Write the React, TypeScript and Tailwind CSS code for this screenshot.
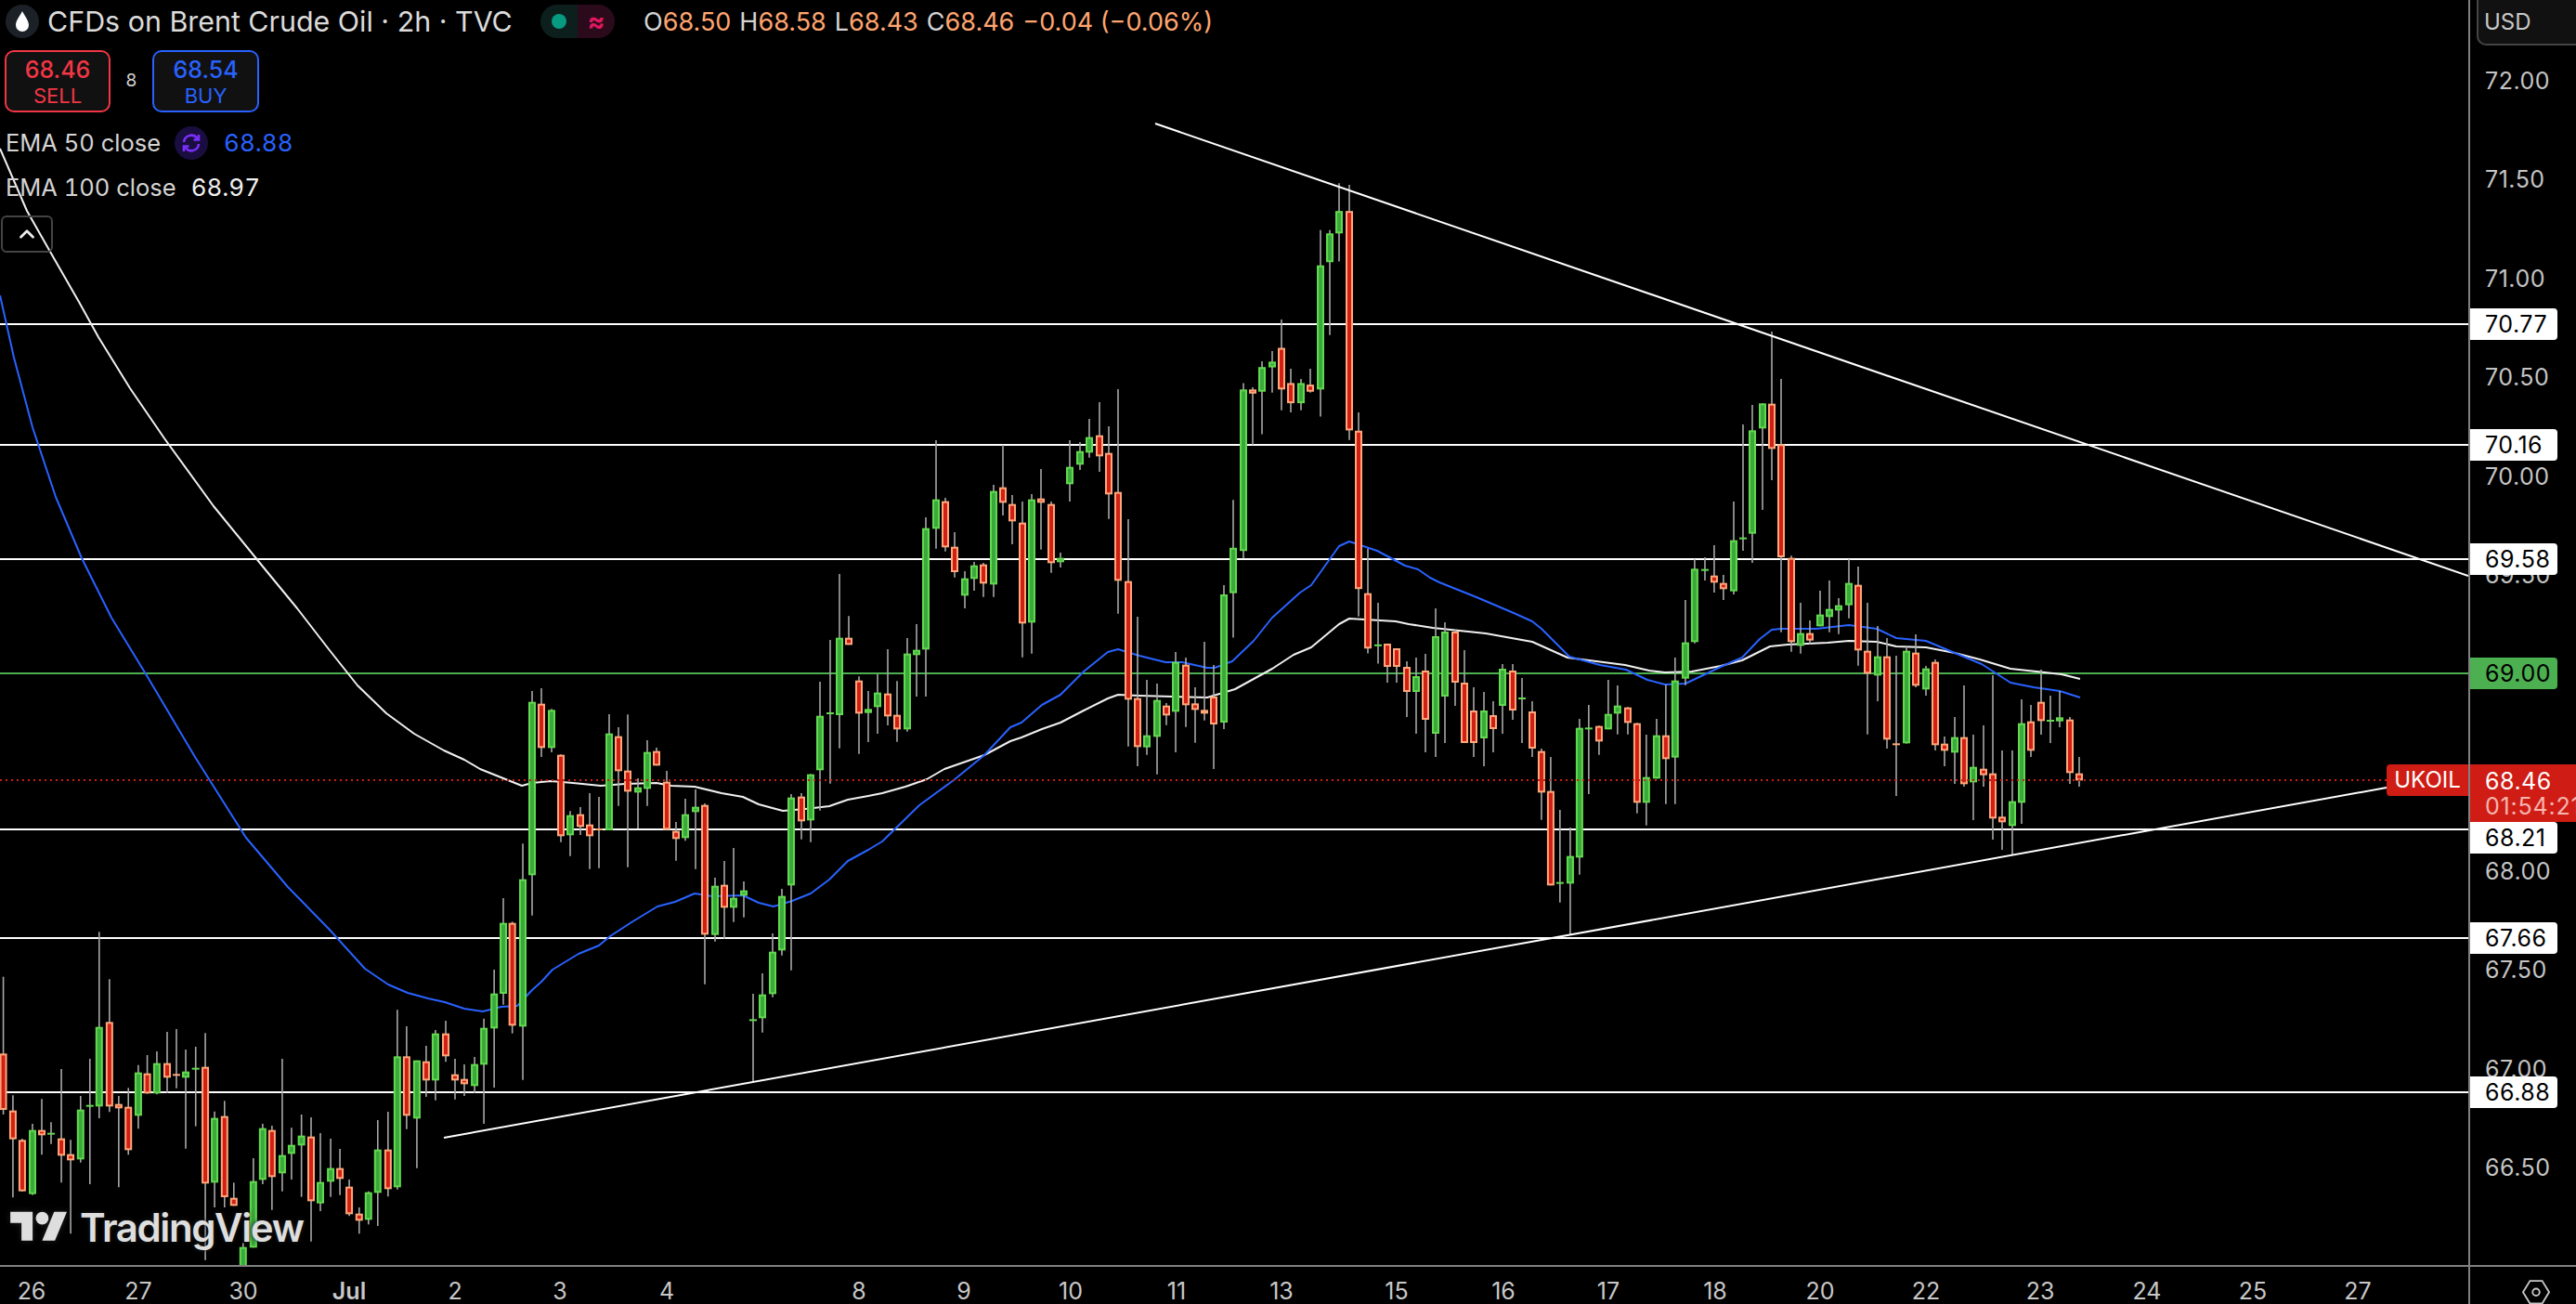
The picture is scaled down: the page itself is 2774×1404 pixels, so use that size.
import { ChevronUp } from "lucide-react";

type Row = [number, number, number, number, number, "g" | "r"];

// rows are read off zoomed crops, so each block carries its own origin and scale
const crop = (ox: number, oy: number, sx: number, sy: number, rows: Row[]) =>
  rows.map(([x, wt, wb, bt, bb, c]) => ({
    x: ox + x / sx,
    wt: oy + wt / sy,
    wb: oy + wb / sy,
    bt: oy + bt / sy,
    bb: oy + bb / sy,
    c,
  }));

const candles = [
  ...crop(0, 1000, 2.8, 3, [
    [10, 155, 600, 403, 585, "r"], [39, 538, 868, 587, 680, "r"], [67, 678, 848, 682, 848, "r"], [98, 630, 860, 650, 857, "g"],
    [126, 550, 730, 650, 667, "r"], [154, 625, 695, 662, 662, "g"], [185, 453, 820, 677, 733, "r"], [213, 682, 985, 728, 748, "r"],
    [243, 540, 755, 584, 745, "g"], [271, 420, 825, 572, 572, "g"], [299, 10, 612, 317, 574, "g"], [330, 163, 592, 301, 574, "r"],
    [358, 540, 835, 566, 580, "r"], [387, 514, 730, 575, 715, "r"], [417, 440, 646, 464, 604, "g"], [444, 408, 533, 467, 532, "r"],
    [473, 396, 535, 434, 532, "g"], [504, 333, 530, 434, 481, "r"], [532, 324, 515, 472, 482, "r"], [560, 390, 710, 461, 481, "g"],
    [590, 381, 638, 452, 452, "g"], [619, 337, 1070, 446, 823, "r"], [647, 590, 900, 611, 820, "g"], [677, 556, 900, 605, 867, "r"],
    [705, 820, 895, 869, 895, "r"], [733, 1015, 1100, 1028, 1100, "g"], [764, 741, 1030, 815, 1030, "g"], [792, 630, 825, 644, 811, "g"],
    [820, 636, 908, 650, 802, "r"], [851, 420, 848, 731, 790, "g"], [879, 643, 810, 698, 727, "g"], [909, 600, 866, 668, 700, "g"],
    [938, 609, 1010, 671, 880, "r"], [966, 660, 912, 818, 887, "g"], [997, 678, 866, 773, 817, "g"], [1025, 711, 860, 773, 808, "r"],
    [1053, 810, 928, 833, 922, "r"], [1083, 900, 985, 920, 943, "r"], [1111, 848, 955, 851, 940, "g"], [1139, 618, 960, 713, 853, "g"],
    [1170, 591, 865, 713, 841, "r"], [1198, 262, 842, 412, 835, "g"], [1226, 315, 647, 412, 604, "r"], [1257, 425, 773, 425, 613, "g"],
    [1285, 378, 543, 428, 490, "r"], [1313, 327, 554, 338, 490, "g"], [1344, 297, 430, 338, 412, "r"], [1372, 420, 551, 470, 490, "r"],
    [1400, 438, 540, 485, 502, "r"], [1431, 414, 530, 437, 508, "g"], [1459, 290, 630, 320, 439, "g"], [1490, 132, 513, 209, 322, "g"],
  ]),
  ...crop(500, 720, 3, 3, [
    [126, 741, 1085, 821, 1050, "g"], [155, 817, 1178, 821, 1153, "r"], [189, 565, 1328, 680, 1156, "g"], [219, 72, 797, 107, 667, "g"],
    [249, 63, 285, 113, 256, "r"], [282, 130, 270, 133, 256, "g"], [312, 277, 560, 278, 541, "r"], [342, 460, 605, 473, 538, "g"],
    [375, 447, 537, 470, 511, "r"], [405, 402, 647, 503, 541, "r"], [435, 414, 644, 519, 519, "r"], [468, 147, 522, 209, 522, "g"],
    [498, 189, 443, 218, 331, "r"], [528, 148, 641, 329, 397, "r"], [561, 354, 516, 383, 400, "g"], [591, 231, 443, 269, 388, "g"],
    [621, 255, 313, 266, 313, "r"], [654, 330, 520, 365, 520, "r"], [684, 495, 620, 524, 550, "r"], [714, 420, 556, 470, 547, "g"],
    [747, 390, 647, 446, 463, "g"], [777, 435, 1019, 440, 859, "r"], [810, 675, 881, 701, 860, "g"], [840, 621, 872, 698, 772, "r"],
    [870, 579, 818, 740, 772, "g"], [903, 687, 803, 716, 733, "g"], [933, 1050, 1335, 1135, 1135, "g"], [963, 984, 1175, 1052, 1129, "g"],
    [996, 855, 1061, 914, 1051, "g"], [1026, 711, 926, 734, 910, "g"], [1056, 405, 974, 416, 700, "g"], [1089, 402, 551, 413, 493, "r"],
    [1119, 340, 560, 341, 490, "g"], [1149, 42, 458, 152, 328, "g"],
  ]),
  ...crop(850, 440, 3, 3, [
    [132, 747, 1211, 984, 984, "g"], [162, 534, 1097, 740, 990, "g"], [192, 670, 763, 740, 763, "r"], [225, 865, 1115, 878, 985, "r"],
    [255, 912, 1077, 970, 983, "g"], [285, 858, 1050, 917, 964, "g"], [318, 777, 1023, 920, 994, "r"], [348, 880, 1076, 989, 1036, "r"],
    [381, 741, 1043, 791, 1036, "g"], [411, 696, 930, 779, 796, "g"], [441, 351, 930, 386, 778, "g"], [474, 102, 452, 293, 388, "g"],
    [504, 288, 461, 299, 448, "r"], [534, 399, 545, 446, 528, "r"], [567, 525, 645, 548, 604, "g"], [597, 495, 588, 506, 550, "g"],
    [627, 498, 608, 503, 565, "r"], [660, 246, 608, 266, 568, "g"], [690, 117, 345, 254, 304, "r"], [720, 279, 438, 308, 364, "r"],
    [753, 300, 803, 368, 694, "r"], [783, 276, 791, 293, 691, "g"], [813, 195, 455, 290, 304, "r"], [846, 300, 530, 308, 499, "r"],
    [876, 465, 513, 482, 496, "g"], [906, 102, 300, 188, 244, "g"], [939, 108, 198, 137, 181, "g"], [969, 33, 158, 92, 142, "g"],
    [1002, -21, 204, 86, 154, "r"], [1032, 57, 356, 143, 277, "r"], [1062, -63, 662, 269, 556, "r"], [1095, 357, 1091, 557, 940, "r"],
    [1125, 672, 1155, 935, 1093, "r"], [1155, 876, 1118, 1055, 1094, "g"], [1188, 888, 1181, 941, 1060, "g"], [1218, 951, 1022, 959, 991, "r"],
    [1248, 786, 1110, 818, 979, "g"], [1281, 804, 1028, 827, 958, "r"], [1311, 900, 1079, 952, 973, "r"], [1341, 753, 1007, 973, 985, "r"],
  ]),
  ...crop(0, 0, 1, 1, [
    [1307, 716, 828, 750, 780, "r"], [1318, 630, 785, 640, 778, "g"],
  ]),
  ...crop(1250, 180, 3, 2.904, [
    [234, 1040, 1471, 1190, 1332, "g"], [267, 675, 1223, 695, 1200, "g"], [297, 688, 868, 695, 708, "r"], [327, 607, 835, 625, 702, "g"],
    [360, 575, 705, 608, 626, "g"], [390, 476, 760, 565, 695, "r"], [420, 630, 767, 675, 738, "r"], [453, 662, 760, 675, 738, "g"],
    [483, 630, 705, 680, 702, "r"], [516, 197, 780, 307, 695, "g"], [546, 197, 525, 207, 297, "g"], [576, 50, 295, 137, 207, "g"],
    [609, 55, 853, 137, 823, "r"], [639, 767, 1405, 824, 1319, "r"], [669, 1193, 1520, 1332, 1505, "r"], [702, 1362, 1552, 1495, 1495, "g"],
  ]),
  // no crop for this stretch, estimated from the full picture
  ...crop(0, 0, 1, 1, [
    [1494, 693, 735, 693, 718, "r"], [1504, 698, 735, 698, 718, "r"], [1515, 712, 772, 718, 745, "r"], [1525, 708, 790, 728, 745, "g"],
    [1535, 704, 810, 722, 775, "r"], [1546, 655, 815, 685, 790, "g"], [1556, 670, 800, 680, 750, "g"], [1567, 678, 760, 680, 735, "r"],
    [1577, 700, 800, 735, 800, "r"], [1587, 740, 815, 765, 800, "r"], [1598, 745, 825, 765, 795, "g"], [1608, 755, 810, 770, 785, "r"],
    [1618, 715, 790, 720, 760, "g"], [1629, 715, 775, 722, 765, "r"], [1639, 730, 800, 752, 752, "g"], [1650, 755, 815, 766, 806, "r"],
  ]),
  ...crop(1650, 560, 2.613, 3, [
    [26, 738, 968, 746, 880, "r"], [52, 765, 1180, 875, 1180, "r"], [78, 936, 1235, 1172, 1172, "g"], [107, 993, 1338, 1085, 1174, "g"],
    [133, 642, 1145, 671, 1090, "g"], [159, 597, 885, 673, 673, "g"], [188, 664, 758, 665, 715, "r"], [214, 516, 676, 626, 676, "g"],
    [240, 534, 692, 599, 625, "g"], [269, 604, 692, 605, 655, "r"], [295, 655, 947, 656, 913, "r"], [321, 693, 986, 830, 913, "g"],
    [350, 642, 835, 695, 835, "g"], [376, 532, 917, 695, 772, "r"], [402, 444, 917, 518, 767, "g"], [431, 258, 533, 395, 512, "g"],
    [457, 126, 398, 157, 394, "g"], [486, 120, 195, 161, 161, "g"], [512, 81, 234, 179, 202, "r"], [538, 177, 258, 203, 223, "r"],
    [567, -60, 240, 65, 230, "g"],
  ]),
  ...crop(1700, 340, 3, 3, [
    [531, 351, 759, 719, 719, "g"], [561, 288, 798, 370, 704, "g"], [594, 283, 627, 283, 364, "g"], [624, 51, 531, 284, 430, "r"],
    [654, 204, 1022, 415, 780, "r"], [687, 775, 1085, 782, 1054, "r"], [717, 927, 1091, 1025, 1066, "g"], [747, 984, 1060, 1025, 1049, "r"],
    [780, 888, 1003, 965, 1003, "g"], [810, 855, 1022, 947, 973, "g"], [840, 912, 1028, 935, 952, "g"], [873, 786, 977, 863, 935, "g"],
  ]),
  ...crop(1950, 640, 3, 3, [
    [153, -90, 230, -31, 181, "r"], [183, 27, 452, 182, 256, "r"], [216, 102, 345, 200, 262, "g"], [246, 141, 498, 200, 469, "r"],
    [276, 198, 651, 484, 484, "r"], [309, 165, 482, 182, 481, "g"], [339, 129, 300, 188, 295, "r"], [372, 231, 327, 239, 307, "g"],
    [402, 210, 504, 218, 487, "r"], [432, 459, 555, 482, 505, "r"], [465, 396, 612, 461, 511, "g"], [495, 294, 621, 461, 613, "r"],
    [525, 453, 729, 557, 607, "g"], [558, 423, 621, 563, 584, "r"], [588, 261, 792, 578, 724, "r"], [618, 504, 825, 718, 736, "r"],
    [651, 504, 840, 668, 748, "g"], [681, 339, 741, 416, 673, "g"], [711, 357, 525, 410, 505, "r"], [744, 243, 453, 347, 409, "r"],
    [774, 327, 480, 408, 408, "g"], [804, 312, 429, 397, 410, "g"], [837, 396, 612, 404, 577, "r"], [867, 525, 621, 578, 601, "r"],
  ]),
];

const emaBlue =
  "0,318 15,385 35,460 60,535 88,601 120,665 159,729 210,815 265,902 310,955 354,1000 393,1043 418,1060 439,1069 461,1075 479,1079 500,1086 520,1089 540,1084 557,1083 573,1066 583,1057 595,1044 623,1027 645,1018 657,1008 680,993 708,976 727,971 748,962 767,965 800,964 817,972 833,976 853,970 873,962 893,947 913,927 935,915 950,906 990,867 1027,840 1060,813 1088,783 1100,778 1122,759 1142,748 1167,723 1193,702 1204,699 1227,706 1255,713 1273,713 1300,719 1308,719 1327,712 1350,690 1370,665 1400,638 1412,630 1442,588 1453,583 1483,593 1513,609 1527,613 1540,622 1550,627 1590,643 1630,660 1650,669 1660,677 1690,707 1723,716 1751,721 1774,732 1793,737 1815,736 1853,718 1876,708 1895,688 1908,678 1918,677 1956,677 1991,673 2021,677 2042,687 2074,690 2105,703 2134,715 2165,735 2190,740 2218,744 2240,751";

const emaWhite =
  "0,160 29,227 58,278 85,325 106,363 140,418 177,472 230,545 283,610 320,655 354,699 385,738 416,768 446,790 478,808 500,818 517,828 542,838 562,846 573,843 593,841 617,843 647,846 673,844 707,843 723,846 748,847 777,854 800,858 817,866 843,873 867,871 893,868 913,861 935,857 950,854 975,847 998,839 1017,828 1060,813 1088,798 1100,794 1122,785 1142,778 1167,765 1193,752 1204,748 1227,749 1300,751 1330,742 1370,720 1393,705 1412,697 1442,672 1453,666 1503,669 1517,672 1543,676 1600,682 1650,691 1688,708 1750,716 1776,722 1793,724 1822,723 1853,717 1876,711 1906,696 1925,694 1968,692 1991,690 2021,691 2042,696 2074,697 2105,703 2132,710 2165,720 2193,723 2220,726 2240,731";

const levels = [349, 479, 602, 893, 1010, 1176];

// 69.00 and 68.50 sit behind their tags in the picture
const priceTicks = ["72.00", "71.50", "71.00", "70.50", "70.00", "69.50", "68.00", "67.50", "67.00", "66.50"];

const priceTags = [
  { y: 349, label: "70.77", bg: "bg-white" },
  { y: 479, label: "70.16", bg: "bg-white" },
  { y: 602, label: "69.58", bg: "bg-white" },
  { y: 725, label: "69.00", bg: "bg-[#4caf50]" },
  { y: 902, label: "68.21", bg: "bg-white" },
  { y: 1010, label: "67.66", bg: "bg-white" },
  { y: 1176, label: "66.88", bg: "bg-white" },
];

const timeTicks: [string, number][] = [
  ["26", 34], ["27", 149], ["30", 262], ["Jul", 376], ["2", 490], ["3", 603], ["4", 718], ["8", 925], ["9", 1038], ["10", 1153], ["11", 1267],
  ["13", 1380], ["15", 1504], ["16", 1619], ["17", 1732], ["18", 1847], ["20", 1960], ["22", 2074], ["23", 2197], ["24", 2312], ["25", 2426], ["27", 2539],
];

function Chart() {
  return (
    <svg width={2658} height={1362} className="block">
      {levels.map((y) => (
        <line key={y} x1={0} x2={2658} y1={y} y2={y} stroke="#ffffff" strokeWidth={2} />
      ))}
      <line x1={0} x2={2658} y1={725} y2={725} stroke="#4caf50" strokeWidth={2} />
      <polyline points={emaWhite} fill="none" stroke="#f0f0f0" strokeWidth={2} strokeLinejoin="round" />
      <polyline points={emaBlue} fill="none" stroke="#2962ff" strokeWidth={2} strokeLinejoin="round" />
      {candles.map((k, i) => {
        const line = k.c === "g" ? "#62d94e" : "#ffa77a";
        const fill = k.c === "g" ? "#3aa93c" : "#d11f14";
        return (
          <g key={i}>
            <line x1={k.x} x2={k.x} y1={k.wt} y2={k.wb} stroke="#a8a8a8" strokeWidth={1.6} />
            {k.bb - k.bt < 4 ? (
              <rect x={k.x - 4} y={k.bt - 1} width={8} height={2} fill={line} />
            ) : (
              <rect x={k.x - 3} y={k.bt + 1} width={6} height={k.bb - k.bt - 2} fill={fill} stroke={line} strokeWidth={2} />
            )}
          </g>
        );
      })}
      <line x1={0} x2={2570} y1={840} y2={840} stroke="#cf1d15" strokeWidth={2} strokeDasharray="2 4" />
      <line x1={1244} y1={133} x2={2658} y2={620} stroke="#ffffff" strokeWidth={2} />
      <line x1={478} y1={1225} x2={2570} y2={848} stroke="#ffffff" strokeWidth={2} />
    </svg>
  );
}

function Legend() {
  return (
    <div className="absolute left-0 top-0 flex flex-col items-start">
      <div className="flex h-[46px] items-center">
        <div className="ml-[6px] flex h-9 w-9 items-center justify-center rounded-full bg-[#1c2027]">
          <svg width="16" height="24" viewBox="0 0 16 24">
            <path d="M8 1C5.5 6 1 11 1 16a7 7 0 0 0 14 0C15 11 10.5 6 8 1z" fill="#ffffff" />
          </svg>
        </div>
        <span className="ml-[9px] w-[531px] text-[30.4px] leading-none text-[#dbdbdb]">CFDs on Brent Crude Oil · 2h · TVC</span>
        <div className="flex h-9 w-20">
          <div className="flex w-10 items-center justify-center rounded-l-full bg-[#0c1f1c]">
            <div className="h-4 w-4 rounded-full bg-[#089981]" />
          </div>
          <div className="flex w-10 items-center justify-center rounded-r-full bg-[#2b0b1b] text-[28px] font-bold leading-none text-[#e0175f]">≈</div>
        </div>
        <div className="ml-[31px] flex gap-[9px] text-[27px] leading-none text-[#d4d4d4]">
          <span>O<span className="text-[#ffa570]">68.50</span></span>
          <span>H<span className="text-[#ffa570]">68.58</span></span>
          <span>L<span className="text-[#ffa570]">68.43</span></span>
          <span>C<span className="text-[#ffa570]">68.46</span></span>
          <span className="text-[#ffa570]">−0.04 (−0.06%)</span>
        </div>
      </div>
      <div className="mt-2 ml-[5px] flex items-center">
        <div className="flex h-[67px] w-[114px] flex-col items-center justify-center rounded-[10px] border-2 border-[#f23645] bg-[#111111] text-[#f23645]">
          <span className="text-[25px] font-medium leading-[30px]">68.46</span>
          <span className="text-[22px] leading-[26px]">SELL</span>
        </div>
        <span className="w-[45px] text-center text-[19px] text-[#d4d4d4]">8</span>
        <div className="flex h-[67px] w-[115px] flex-col items-center justify-center rounded-[10px] border-2 border-[#2962ff] bg-[#111111] text-[#2962ff]">
          <span className="text-[25px] font-medium leading-[30px]">68.54</span>
          <span className="text-[22px] leading-[26px]">BUY</span>
        </div>
      </div>
      <div className="ml-[6px] mt-[15px] flex h-9 items-center text-[25.5px] leading-none tabular-nums">
        <span className="text-[#d4d4d4]">EMA 50 close</span>
        <div className="ml-[15px] flex h-9 w-9 items-center justify-center rounded-full bg-[#1a0e40]">
          <svg width="24" height="24" viewBox="0 0 24 24" fill="none" stroke="#7b2fff" strokeWidth="2.6">
            <path d="M4 11a8 8 0 0 1 14-4.5L20 8" />
            <path d="M20 3v5.5h-5.5" />
            <path d="M20 13a8 8 0 0 1-14 4.5L4 16" />
            <path d="M4 21v-5.5h5.5" />
          </svg>
        </div>
        <span className="ml-[17px] text-[26px] text-[#2962ff]">68.88</span>
      </div>
      <div className="ml-[6px] mt-[12px] flex h-9 items-center gap-[16px] text-[25.5px] leading-none tabular-nums">
        <span className="text-[#d4d4d4]">EMA 100 close</span>
        <span className="text-[26px] text-[#f0f0f0]">68.97</span>
      </div>
      <div className="ml-px mt-[12px] flex h-10 w-14 items-center justify-center rounded-md border-2 border-[#444444]">
        <ChevronUp size={26} color="#eeeeee" strokeWidth={2.5} />
      </div>
    </div>
  );
}

function Watermark() {
  return (
    <div className="absolute bottom-[16px] left-[11px] flex items-center gap-[13px]">
      <svg width="62" height="48" viewBox="0 0 36 28" fill="#dedede" style={{ filter: "drop-shadow(0 0 3px #222222)" }}>
        <path d="M14 22H7V11H0V4h14v18zM28 22h-8l7.5-18h8L28 22z" />
        <circle cx="20" cy="8" r="4" />
      </svg>
      <span className="text-[42px] font-semibold leading-none tracking-[-1.4px] text-[#dedede] [text-shadow:0_0_5px_#222222]">TradingView</span>
    </div>
  );
}

function PriceAxis() {
  return (
    <div className="relative h-full w-[116px] overflow-hidden border-l-2 border-[#808080] text-[25px] leading-none tracking-[0.5px]">
      <div className="ml-[7px] flex h-[49px] items-center rounded-bl-[10px] border-b-2 border-l-2 border-[#444444] bg-[#111111] pl-[6px] text-[24px] tracking-normal text-[#c8c8c8]">
        USD
      </div>
      {priceTicks.map((p) => (
        <span key={p} className="absolute left-[16px] -translate-y-1/2 text-[#c4c4c4]" style={{ top: 87 + (72 - Number(p)) * 212.75 }}>
          {p}
        </span>
      ))}
      {priceTags.map((t) => (
        <div
          key={t.label}
          className={`absolute left-0 flex h-[34px] w-[94px] -translate-y-1/2 items-center rounded-r-[4px] pl-[16px] text-black ${t.bg}`}
          style={{ top: t.y }}
        >
          {t.label}
        </div>
      ))}
      <div className="absolute left-0 top-[823px] flex h-[62px] w-full flex-col bg-[#cf1d15] pl-[16px] pt-[5px] whitespace-nowrap">
        <span className="leading-[27px] text-white">68.46</span>
        <span className="leading-[26px] tracking-[0.8px] text-[#f5b5ae]">01:54:21</span>
      </div>
    </div>
  );
}

export default function App() {
  return (
    <div className="flex h-[1404px] w-[2774px] flex-col overflow-hidden bg-black font-['Inter',sans-serif]">
      <div className="flex h-[1362px]">
        <div className="relative h-full w-[2658px] overflow-hidden">
          <Chart />
          <Legend />
          <Watermark />
          <div className="absolute left-[2570px] top-[823px] flex h-[34px] w-[88px] items-center justify-center rounded-l-[4px] bg-[#cf1d15] text-[24px] leading-none text-white">
            UKOIL
          </div>
        </div>
        <PriceAxis />
      </div>
      <div className="flex h-[42px] border-t-2 border-[#808080]">
        <div className="relative w-[2658px] text-[25px] text-[#c8c8c8]">
          {timeTicks.map(([t, x]) => (
            <span key={t + x} className={`absolute top-[14px] -translate-x-1/2 leading-none ${t === "Jul" ? "font-semibold" : ""}`} style={{ left: x }}>
              {t}
            </span>
          ))}
        </div>
        <div className="flex w-[116px] justify-center border-l-2 border-[#808080] pl-[28px]">
          <svg width="30" height="38" viewBox="0 0 32 40" fill="none" stroke="#c8c8c8" strokeWidth="2" className="mt-[12px]">
            <path d="M9 3h14l8 13-8 13H9L1 16z" />
            <circle cx="16" cy="16" r="4" />
          </svg>
        </div>
      </div>
    </div>
  );
}
